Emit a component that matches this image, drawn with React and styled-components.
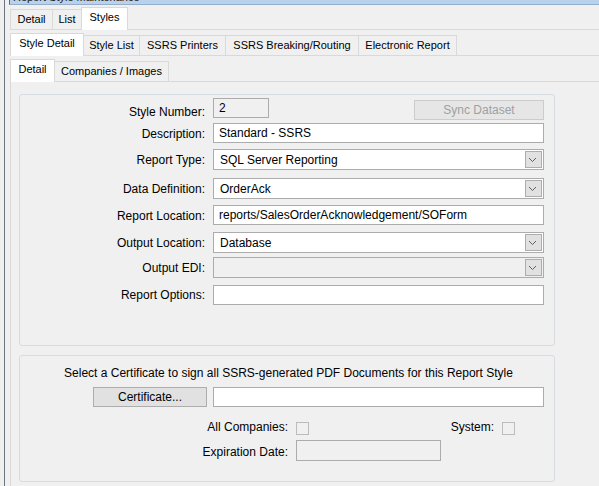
import React from 'react'
import styled, { createGlobalStyle } from 'styled-components'

const GlobalStyle = createGlobalStyle`
    html, body {
        margin: 0;
        padding: 0;
        background: #f0f0f0;
    }
    body {
        font-family: "Liberation Sans", Arial, sans-serif;
        font-size: 12px;
        color: #000;
    }
`;

const Frame = styled.div`
    margin-left: 4px;
    border-left: 1px solid #6d7580;
    height: 486px;
    box-sizing: border-box;
    overflow: hidden;
`;

const TitleBar = styled.div`
    margin-left: 4px;
    height: 4px;
    background: #b9d1ea;
    border-bottom: 1px solid #94aecb;
    border-left: 1px solid #5d6b7c;
    padding-left: 3px;
    overflow: hidden;
`;

const TitleText = styled.div`
    font-size: 11px;
    line-height: 13px;
    margin-top: -9px;
    color: #1a1a1a;
    white-space: nowrap;
`;

const Body = styled.div`
    padding-left: 5px;
`;

const TabStrip = styled.div`
    display: flex;
    align-items: flex-end;
    height: 22px;
    margin-top: ${p => p.$top || 0}px;
    border-bottom: 1px solid #d9d9d9;
`;

const Tab = styled.div`
    position: relative;
    z-index: ${p => (p.$active ? 1 : 0)};
    box-sizing: border-box;
    width: ${p => p.$w}px;
    height: ${p => (p.$active ? 23 : 20)}px;
    margin-bottom: ${p => (p.$active ? -1 : 0)}px;
    margin-left: ${p => (p.$first ? 0 : -1)}px;
    padding-top: 3px;
    border: 1px solid #d9d9d9;
    border-bottom: none;
    background: ${p => (p.$active ? '#ffffff' : '#f0f0f0')};
    font-size: 11px;
    line-height: 13px;
    text-align: center;
    white-space: nowrap;
`;

const Page = styled.div`
    padding-top: 3px;
`;

const InnerPage = styled.div`
    border-left: 1px solid #d9d9d9;
    padding: 12px 0 0 8px;
    height: 420px;
    box-sizing: border-box;
`;

const GroupBox = styled.div`
    box-sizing: border-box;
    width: 536px;
    height: ${p => p.$h}px;
    margin-top: ${p => p.$top || 0}px;
    border: 1px solid #d5dbe1;
    border-radius: 3px;
`;

const FieldRow = styled.div`
    display: flex;
    align-items: flex-start;
    margin-top: ${p => p.$top}px;
    padding-left: ${p => p.$indent || 0}px;
`;

const FieldLabel = styled.div`
    width: ${p => p.$w || 185}px;
    margin-right: 8px;
    padding-top: ${p => p.$dy || 0}px;
    line-height: 14px;
    text-align: right;
    white-space: nowrap;
`;

const TextBox = styled.div`
    box-sizing: border-box;
    width: ${p => p.$w || 331}px;
    height: ${p => p.$h || 20}px;
    margin-left: ${p => p.$ml || 0}px;
    padding: 0 5px;
    border: 1px solid #acacac;
    background: ${p => (p.$disabled ? '#f0f0f0' : '#ffffff')};
    line-height: 18px;
    white-space: nowrap;
    overflow: hidden;
`;

const Combo = styled.div`
    box-sizing: border-box;
    display: flex;
    width: 331px;
    height: 21px;
    border: 1px solid #acacac;
    background: ${p => (p.$disabled ? '#f0f0f0' : '#ffffff')};
`;

const ComboText = styled.div`
    flex: 1;
    padding: 1px 0 0 6px;
    line-height: 18px;
    white-space: nowrap;
    overflow: hidden;
`;

const DropButton = styled.div`
    box-sizing: border-box;
    width: 17px;
    height: 17px;
    margin: 1px;
    border: 1px solid #adadad;
    background: #e1e1e1;
    display: flex;
`;

const PushButton = styled.div`
    box-sizing: border-box;
    width: ${p => p.$w}px;
    height: 20px;
    margin-top: ${p => p.$mt || 0}px;
    margin-left: ${p => p.$ml || 0}px;
    margin-right: ${p => p.$mr || 0}px;
    border: 1px solid ${p => (p.$disabled ? '#cccccc' : '#adadad')};
    background: ${p => (p.$disabled ? '#e6e6e6' : '#e1e1e1')};
    color: ${p => (p.$disabled ? '#a0a0a0' : '#000000')};
    line-height: 18px;
    text-align: center;
    white-space: nowrap;
`;

const Note = styled.div`
    margin-top: 10px;
    padding-left: 3px;
    line-height: 14px;
    text-align: center;
    white-space: nowrap;
`;

const CheckBox = styled.div`
    box-sizing: border-box;
    width: 13px;
    height: 13px;
    margin-top: 2px;
    border: 1px solid #bcbcbc;
    background: #f0f0f0;
`;

const Chevron = () => (
    <svg width="15" height="15" viewBox="0 0 15 15">
        <polyline points="3,6 6.5,9.5 10,6" fill="none" stroke="#606060" strokeWidth="1" />
    </svg>
);

const ComboBox = ({ value, disabled }) => (
    <Combo $disabled={disabled}>
        <ComboText>{value}</ComboText>
        <DropButton><Chevron /></DropButton>
    </Combo>
);

const App = () => {
    return (
        <Frame>
            <GlobalStyle />
            <TitleBar>
                <TitleText>Report Style Maintenance</TitleText>
            </TitleBar>
            <Body>
                <TabStrip $top={2}>
                    <Tab $first $w={43}>Detail</Tab>
                    <Tab $w={30}>List</Tab>
                    <Tab $active $w={47}>Styles</Tab>
                </TabStrip>
                <Page>
                    <TabStrip>
                        <Tab $first $active $w={74}>Style Detail</Tab>
                        <Tab $w={57}>Style List</Tab>
                        <Tab $w={87}>SSRS Printers</Tab>
                        <Tab $w={134}>SSRS Breaking/Routing</Tab>
                        <Tab $w={99}>Electronic Report</Tab>
                    </TabStrip>
                    <Page>
                        <TabStrip>
                            <Tab $first $active $w={45}>Detail</Tab>
                            <Tab $w={115}>Companies / Images</Tab>
                        </TabStrip>
                        <InnerPage>
                            <GroupBox $h={252}>
                                <FieldRow $top={3}>
                                    <FieldLabel $dy={7}>Style Number:</FieldLabel>
                                    <TextBox $w={56} $disabled>2</TextBox>
                                    <PushButton $w={130} $mt={2} $ml={145} $disabled>Sync Dataset</PushButton>
                                </FieldRow>
                                <FieldRow $top={3}>
                                    <FieldLabel $dy={4}>Description:</FieldLabel>
                                    <TextBox>Standard - SSRS</TextBox>
                                </FieldRow>
                                <FieldRow $top={6}>
                                    <FieldLabel $dy={4}>Report Type:</FieldLabel>
                                    <ComboBox value="SQL Server Reporting" />
                                </FieldRow>
                                <FieldRow $top={8}>
                                    <FieldLabel $dy={4}>Data Definition:</FieldLabel>
                                    <ComboBox value="OrderAck" />
                                </FieldRow>
                                <FieldRow $top={6}>
                                    <FieldLabel $dy={4}>Report Location:</FieldLabel>
                                    <TextBox>reports/SalesOrderAcknowledgement/SOForm</TextBox>
                                </FieldRow>
                                <FieldRow $top={7}>
                                    <FieldLabel $dy={4}>Output Location:</FieldLabel>
                                    <ComboBox value="Database" />
                                </FieldRow>
                                <FieldRow $top={4}>
                                    <FieldLabel $dy={4}>Output EDI:</FieldLabel>
                                    <ComboBox value="" disabled />
                                </FieldRow>
                                <FieldRow $top={7}>
                                    <FieldLabel $dy={3}>Report Options:</FieldLabel>
                                    <TextBox />
                                </FieldRow>
                            </GroupBox>
                            <GroupBox $h={127} $top={9}>
                                <Note>Select a Certificate to sign all SSRS-generated PDF Documents for this Report Style</Note>
                                <FieldRow $top={7} $indent={73}>
                                    <PushButton $w={114}>Certificate...</PushButton>
                                    <TextBox $ml={6} />
                                </FieldRow>
                                <FieldRow $top={13}>
                                    <FieldLabel $w={268}>All Companies:</FieldLabel>
                                    <CheckBox />
                                    <FieldLabel $w={185}>System:</FieldLabel>
                                    <CheckBox />
                                </FieldRow>
                                <FieldRow $top={5}>
                                    <FieldLabel $w={268} $dy={5}>Expiration Date:</FieldLabel>
                                    <TextBox $w={145} $h={21} $disabled />
                                </FieldRow>
                            </GroupBox>
                        </InnerPage>
                    </Page>
                </Page>
            </Body>
        </Frame>
    )
}

export default App
